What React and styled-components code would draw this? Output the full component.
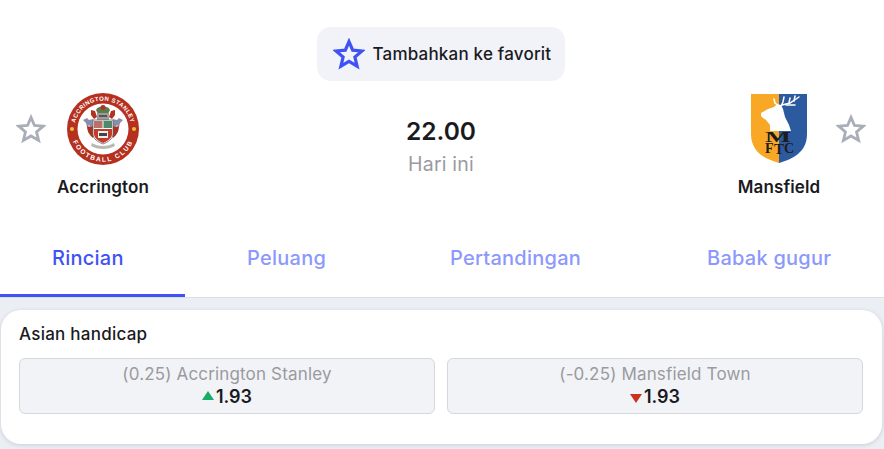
import React from "react";
import styled, { createGlobalStyle } from "styled-components";

const GlobalStyle = createGlobalStyle`
  html, body {
    margin: 0;
    padding: 0;
    height: 449px;
    overflow: hidden;
    background: #ebeef3;
    font-family: "Inter", "Liberation Sans", sans-serif;
    color: #1a1a22;
  }
`;

const Page = styled.div`
  width: 884px;
  height: 449px;
  overflow: hidden;
`;

const Header = styled.header`
  background: #fff;
  height: 298px;
  box-sizing: border-box;
  border-bottom: 1px solid #dcdfe4;
  padding-top: 27px;
`;

const FavoriteRow = styled.div`
  display: flex;
  justify-content: center;
`;

const FavoriteButton = styled.button`
  display: flex;
  align-items: center;
  gap: 8px;
  height: 54px;
  width: 248px;
  margin-left: -3px;
  box-sizing: border-box;
  padding: 0 0 0 16px;
  border: 0;
  border-radius: 14px;
  background: #f1f3f8;
  font: 500 17px "Inter", sans-serif;
  letter-spacing: 0.2px;
  color: #1a1a22;
  white-space: nowrap;
`;

const Match = styled.div`
  display: flex;
  align-items: flex-start;
  justify-content: space-between;
  height: 140px;
  margin-top: 12px;
  padding: 0 18px 0 16px;
`;

const Side = styled.div`
  display: flex;
  align-items: flex-start;
`;

const Team = styled.div`
  display: flex;
  flex-direction: column;
  align-items: center;
  width: 114px;
`;

const CrestSlot = styled.div`
  height: 72px;
`;

const TeamName = styled.div`
  font-weight: 600;
  font-size: 17px;
  line-height: 20px;
  letter-spacing: 0.1px;
  margin-top: 12px;
  white-space: nowrap;
`;

const StarSlot = styled.div`
  padding-top: 21px;
  height: 30px;
`;

const Center = styled.div`
  display: flex;
  flex-direction: column;
  align-items: center;
  padding-top: 22px;
`;

const Time = styled.div`
  font-size: 24.5px;
  line-height: 32px;
  font-weight: 600;
`;

const Day = styled.div`
  font-size: 19.5px;
  line-height: 24px;
  margin-top: 5px;
  color: #9a9a9f;
  letter-spacing: 0.2px;
`;

const Tabs = styled.nav`
  display: flex;
  height: 65px;
  margin-top: -1px;
`;

const Tab = styled.div`
  box-sizing: border-box;
  height: 65px;
  width: ${(p) => p.$width}px;
  padding-left: ${(p) => p.$left}px;
  line-height: 52px;
  font-size: 20px;
  font-weight: 500;
  letter-spacing: 0.25px;
  white-space: nowrap;
  color: ${(p) => (p.$active ? "#3e52f5" : "#8c98fb")};
  border-bottom: 3px solid ${(p) => (p.$active ? "#3e52f5" : "transparent")};
`;

const Card = styled.section`
  box-sizing: border-box;
  width: 881px;
  height: 134px;
  margin: 12px 0 0 1px;
  padding: 13px 18px 0;
  background: #fff;
  border-radius: 20px;
  box-shadow: 0 1px 4px rgba(30, 40, 70, 0.16);
`;

const CardTitle = styled.div`
  font-size: 17px;
  line-height: 22px;
  font-weight: 500;
  letter-spacing: 0.25px;
`;

const Odds = styled.div`
  display: grid;
  grid-template-columns: 416px 416px;
  gap: 12px;
  margin-top: 13px;
`;

const OddButton = styled.div`
  box-sizing: border-box;
  height: 56px;
  padding-top: 4px;
  background: #f1f3f7;
  border: 1px solid #d5d7dc;
  border-radius: 6px;
  text-align: center;
`;

const OddLabel = styled.div`
  font-size: 17px;
  line-height: 22px;
  color: #9a9a9f;
  letter-spacing: 0.16px;
`;

const OddValue = styled.div`
  display: flex;
  align-items: center;
  justify-content: center;
  gap: 2px;
  font-size: 18px;
  line-height: 23px;
  font-weight: 600;
`;

const Arrow = styled.span`
  width: 0;
  height: 0;
  border-left: 6px solid transparent;
  border-right: 6px solid transparent;
  ${(p) =>
    p.$up
      ? "border-bottom: 9px solid #18ac68; margin-top: -3px;"
      : "border-top: 9px solid #c9321f; margin-top: 3px;"}
`;

const StarIcon = ({ size, color, stroke }) => (
  <svg width={size} height={size} viewBox="0 0 32 32" style={{ display: "block" }}>
    <path
      d="M16 3.6l3.7 8.6 9.3.8-7.1 6.1 2.2 9.1L16 23.4l-8.1 4.8 2.2-9.1L3 13l9.3-.8z"
      fill="none"
      stroke={color}
      strokeWidth={stroke}
      strokeLinejoin="miter"
    />
  </svg>
);

const AccringtonCrest = () => (
  <svg width="72" height="72" viewBox="0 0 72 72" style={{ display: "block" }}>
    <defs>
      <path id="topArc" d="M7.6 36a28.4 28.4 0 0 1 56.8 0" />
      <path id="bottomArc" d="M3.4 36a32.6 32.6 0 0 0 65.2 0" />
    </defs>
    <circle cx="36" cy="36" r="36" fill="#b5301f" />
    <circle cx="36" cy="36" r="25.5" fill="#fff" />
    <text fontFamily="Liberation Sans" fontWeight="700" fontSize="6" fill="#fff" letterSpacing="0.4">
      <textPath href="#topArc" startOffset="50%" textAnchor="middle">ACCRINGTON STANLEY</textPath>
    </text>
    <text fontFamily="Liberation Sans" fontWeight="700" fontSize="6.6" fill="#fff" letterSpacing="1.6">
      <textPath href="#bottomArc" startOffset="50%" textAnchor="middle">FOOTBALL CLUB</textPath>
    </text>
    <circle cx="5" cy="36" r="2" fill="#e8c23a" />
    <circle cx="67" cy="36" r="2" fill="#e8c23a" />
    {/* mantling */}
    <path d="M16 27l4-2 2 2 4-1 1 7-3 2-2-3-2 2-1-4z" fill="#8e8cab" />
    <path d="M56 27l-4-2-2 2-4-1-1 7 3 2 2-3 2 2 1-4z" fill="#8e8cab" />
    <path d="M20 33c0 5 2 9 6 12l2-5-2-7-2 1z" fill="#a8321f" />
    <path d="M52 33c0 5-2 9-6 12l-2-5 2-7 2 1z" fill="#a8321f" />
    <path d="M24 17l4 1 2 6-3 2-3-4z" fill="#b5301f" />
    <path d="M48 17l-4 1-2 6 3 2 3-4z" fill="#b5301f" />
    {/* helm and wreath */}
    <path d="M29 17c2-5 12-5 14 0l-2 4H31z" fill="#5f7a4c" />
    <circle cx="36" cy="14.5" r="2.4" fill="#b5301f" />
    <path d="M30 20h12v7H30z" fill="#9c9c9a" />
    <path d="M32 22h8v2h-8z" fill="#55555a" />
    {/* shield */}
    <path d="M26 27h20v14c0 5-5 8-10 10-5-2-10-5-10-10z" fill="#fff" stroke="#66666a" strokeWidth="0.8" />
    <path d="M27 28h8.5v7H27z" fill="#b9716a" />
    <path d="M36.5 28H45v7h-8.5z" fill="#4d8a6a" />
    <path d="M27 36h18v5c0 4-4 7-9 9-5-2-9-5-9-9z" fill="#c23c2b" />
    <path d="M31 38h10v7H31z" fill="#f2efe6" />
    <path d="M32 40h8v3h-8z" fill="#44444a" />
    {/* motto */}
    <path d="M25 50c6 4 16 4 22 0l1 3c-7 4-17 4-24 0z" fill="#b9b9b4" />
  </svg>
);

const MansfieldCrest = () => (
  <svg width="58" height="71" viewBox="0 0 58 71" style={{ display: "block" }}>
    <path d="M1 1h28v69C20 67 1 62 1 41z" fill="#f9a826" />
    <path d="M29 1h28v40c0 21-19 26-28 29z" fill="#2c5a9f" />
    {/* antlers */}
    <g fill="none" stroke="#fff" strokeWidth="1.5" strokeLinecap="round">
      <path d="M29 13l-4-3-1-4" />
      <path d="M31 13l2-4 1-5" />
      <path d="M32 12l8-2 9-6" />
      <path d="M39 10l1-5" />
      <path d="M44 8l1-5" />
      <path d="M36 12l9 0" />
    </g>
    {/* stag head */}
    <path d="M11 20l7-4 6-2 3-3 4 1 2 4 2 8 4 8 2 6H20v-6l-4-5-3-2-2-2z" fill="#fff" />
    {/* MFTC lettering */}
    <text x="15" y="49" textLength="26" lengthAdjust="spacingAndGlyphs" fontFamily="Liberation Serif" fontWeight="700" fontSize="15" fill="#1c1c1c">M</text>
    <text x="15" y="60" fontFamily="Liberation Serif" fontWeight="700" fontSize="14" fill="#1c1c1c">F</text>
    <text x="24" y="61" fontFamily="Liberation Serif" fontWeight="700" fontSize="15" fill="#1c1c1c">T</text>
    <text x="34" y="60" fontFamily="Liberation Serif" fontWeight="700" fontSize="14" fill="#1c1c1c">C</text>
  </svg>
);

const tabs = [
  { label: "Rincian", width: 185, left: 52, active: true },
  { label: "Peluang", width: 203, left: 62 },
  { label: "Pertandingan", width: 257, left: 62 },
  { label: "Babak gugur", width: 239, left: 62 },
];

const odds = [
  { label: "(0.25) Accrington Stanley", value: "1.93", up: true },
  { label: "(-0.25) Mansfield Town", value: "1.93", up: false },
];

const App = () => (
  <Page>
    <GlobalStyle />
    <Header>
      <FavoriteRow>
        <FavoriteButton>
          <StarIcon size={32} color="#3e52f5" stroke={3.2} />
          Tambahkan ke favorit
        </FavoriteButton>
      </FavoriteRow>
      <Match>
        <Side>
          <StarSlot>
            <StarIcon size={30} color="#a9aeb9" stroke={3} />
          </StarSlot>
          <Team>
            <CrestSlot>
              <AccringtonCrest />
            </CrestSlot>
            <TeamName>Accrington</TeamName>
          </Team>
        </Side>
        <Center>
          <Time>22.00</Time>
          <Day>Hari ini</Day>
        </Center>
        <Side>
          <Team>
            <CrestSlot>
              <MansfieldCrest />
            </CrestSlot>
            <TeamName>Mansfield</TeamName>
          </Team>
          <StarSlot>
            <StarIcon size={30} color="#a9aeb9" stroke={3} />
          </StarSlot>
        </Side>
      </Match>
      <Tabs>
        {tabs.map((tab) => (
          <Tab key={tab.label} $width={tab.width} $left={tab.left} $active={tab.active}>
            {tab.label}
          </Tab>
        ))}
      </Tabs>
    </Header>
    <Card>
      <CardTitle>Asian handicap</CardTitle>
      <Odds>
        {odds.map((odd) => (
          <OddButton key={odd.label}>
            <OddLabel>{odd.label}</OddLabel>
            <OddValue>
              <Arrow $up={odd.up} />
              {odd.value}
            </OddValue>
          </OddButton>
        ))}
      </Odds>
    </Card>
  </Page>
);

export default App;
